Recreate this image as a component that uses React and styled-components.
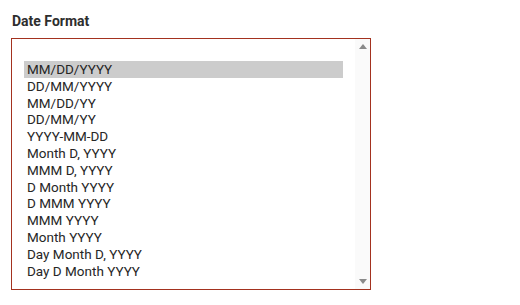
import React from "react";
import styled, { createGlobalStyle } from "styled-components";

const GlobalStyle = createGlobalStyle`
  html, body {
    margin: 0;
    padding: 0;
    background: #fff;
  }
  body {
    font-family: Roboto, "Liberation Sans", sans-serif;
  }
`;

const Container = styled.div`
  padding: 13px 0 0 11px;
  width: 360px;
`;

const Label = styled.div`
  font-size: 14px;
  font-weight: 700;
  color: #2e2e2e;
  line-height: 16px;
  margin: 0 0 9px 1px;
`;

const Box = styled.div`
  display: flex;
  height: 250px;
  border: 1px solid #a3321f;
  background: #fff;
  overflow: hidden;
`;

const List = styled.ul`
  flex: 1;
  list-style: none;
  margin: 0;
  padding: 22px 12px 0 12px;
`;

const Item = styled.li`
  font-size: 13.5px;
  line-height: 16.8px;
  height: 16.8px;
  padding-left: 3px;
  color: #262626;
  white-space: nowrap;
  background: ${(p) => (p.selected ? "#cccccc" : "transparent")};
`;

const Scrollbar = styled.div`
  width: 15px;
  background: #fafafa;
  display: flex;
  flex-direction: column;
  justify-content: space-between;
  align-items: center;
  padding: 5px 0;
`;

const Arrow = styled.div`
  width: 0;
  height: 0;
  border-left: 4px solid transparent;
  border-right: 4px solid transparent;
  ${(p) =>
    p.down
      ? "border-top: 5px solid #8a8a8a;"
      : "border-bottom: 5px solid #8a8a8a;"}
`;

const formats = [
  "MM/DD/YYYY",
  "DD/MM/YYYY",
  "MM/DD/YY",
  "DD/MM/YY",
  "YYYY-MM-DD",
  "Month D, YYYY",
  "MMM D, YYYY",
  "D Month YYYY",
  "D MMM YYYY",
  "MMM YYYY",
  "Month YYYY",
  "Day Month D, YYYY",
  "Day D Month YYYY",
];

export default function App() {
  return (
    <>
      <GlobalStyle />
      <Container>
        <Label>Date Format</Label>
        <Box>
          <List>
            {formats.map((f, i) => (
              <Item key={f} selected={i === 0}>
                {f}
              </Item>
            ))}
          </List>
          <Scrollbar>
            <Arrow />
            <Arrow down />
          </Scrollbar>
        </Box>
      </Container>
    </>
  );
}
